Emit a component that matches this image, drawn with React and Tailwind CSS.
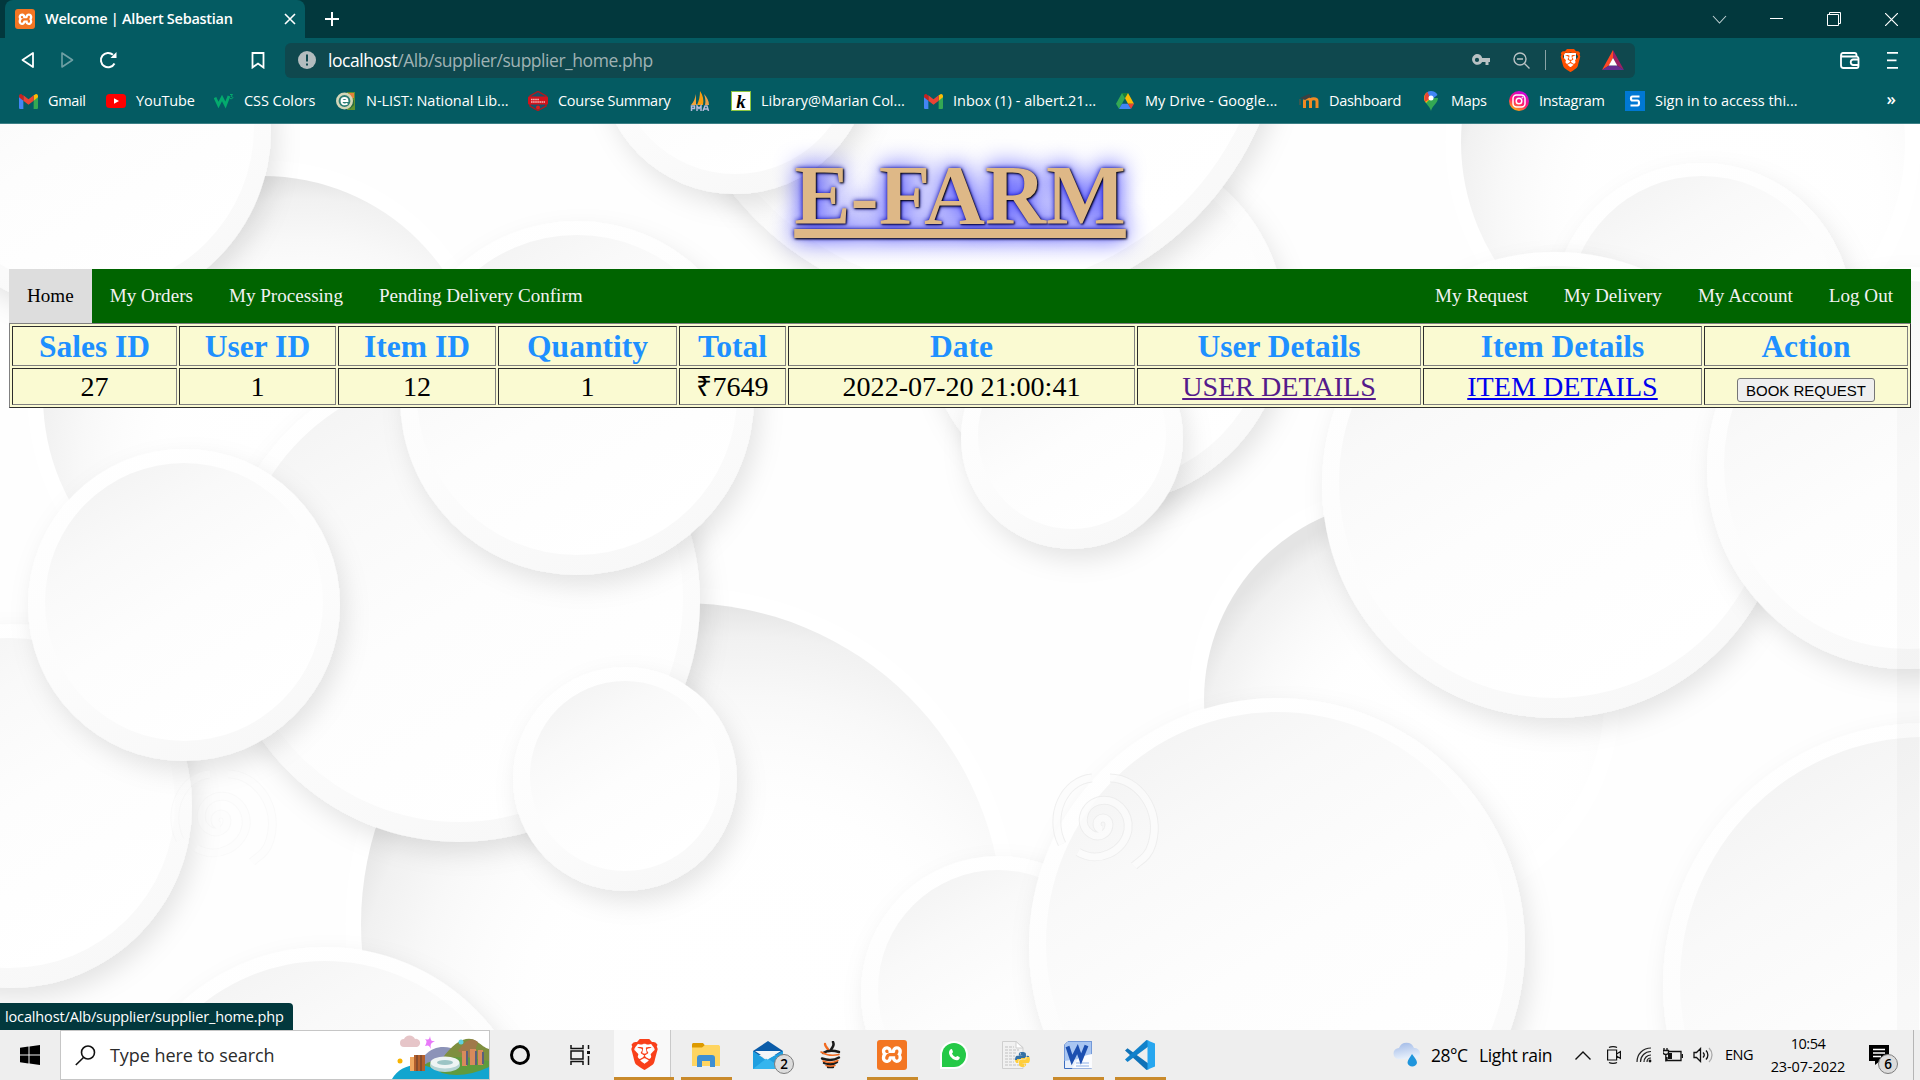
import React from "react";
import { SiBrave, SiXampp } from "react-icons/si";
import { FaPython } from "react-icons/fa";

const UI = "font-['Open_Sans','Noto_Sans',sans-serif]";

/* ---------- page backdrop: overlapping paper discs ---------- */

function Disc({ x, y, r, rim = 17 }) {
  return (
    <g>
      <circle cx={x} cy={y} r={r} fill="url(#rim)" filter="url(#drop)" />
      <circle cx={x} cy={y - 3} r={r - rim} fill="url(#face)" />
    </g>
  );
}

function Hollow({ x, y, r }) {
  return (
    <g>
      <circle cx={x} cy={y} r={r + 16} fill="#ffffff" opacity="0.5" />
      <circle cx={x} cy={y} r={r} fill="url(#hollow)" />
    </g>
  );
}

function Spiral({ x, y, opacity }) {
  return (
    <g transform={`translate(${x} ${y})`} fill="none" opacity={opacity}>
      <path
        d="M0 6a6 6 0 1 1 7-6c0 10-10 15-18 10C-24 2-20-18-4-23 14-27 28-12 26 6 22 28-4 40-24 28M8-46C36-46 60-14 50 20 46 34 38 36 32 42M-40 20C-54-8-38-44-10-46"
        stroke="#ececec"
        strokeWidth="9"
      />
      <path
        d="M0 6a6 6 0 1 1 7-6c0 10-10 15-18 10C-24 2-20-18-4-23 14-27 28-12 26 6 22 28-4 40-24 28M8-46C36-46 60-14 50 20 46 34 38 36 32 42M-40 20C-54-8-38-44-10-46"
        stroke="#fcfcfc"
        strokeWidth="7"
      />
    </g>
  );
}

function Backdrop() {
  return (
    <svg className="absolute inset-0 h-full w-full" viewBox="0 124 1920 906" preserveAspectRatio="none">
      <defs>
        <linearGradient id="rim" x1="0.25" y1="0" x2="0.6" y2="1">
          <stop offset="0" stopColor="#ffffff" />
          <stop offset="0.6" stopColor="#fcfcfc" />
          <stop offset="1" stopColor="#f8f8f8" />
        </linearGradient>
        <linearGradient id="face" x1="0.15" y1="0.05" x2="0.7" y2="0.95">
          <stop offset="0" stopColor="#f3f3f3" />
          <stop offset="0.25" stopColor="#f9f9f9" />
          <stop offset="0.55" stopColor="#fdfdfd" />
          <stop offset="1" stopColor="#ffffff" />
        </linearGradient>
        <radialGradient id="hollow" cx="0.6" cy="0.66" r="0.66">
          <stop offset="0" stopColor="#fefefe" stopOpacity="0" />
          <stop offset="0.5" stopColor="#fdfdfd" stopOpacity="0.3" />
          <stop offset="0.78" stopColor="#f8f8f8" />
          <stop offset="0.92" stopColor="#f1f1f1" />
          <stop offset="1" stopColor="#e4e4e4" />
        </radialGradient>
        <filter id="drop" x="-20%" y="-20%" width="150%" height="150%">
          <feDropShadow dx="6" dy="11" stdDeviation="12" floodColor="#000" floodOpacity="0.1" />
        </filter>
      </defs>
      <rect y="124" width="1920" height="906" fill="#fefefe" />
      <Disc x={1105} y={324} r={180} />
      <Disc x={975} y={0} r={310} />
      <Disc x={735} y={58} r={136} />
      <Hollow x={682} y={924} r={321} />
      <Hollow x={263} y={396} r={220} />
      <Disc x={90} y={130} r={181} />
      <Hollow x={1404} y={700} r={200} />
      <Hollow x={1683} y={142} r={222} />
      <Disc x={1702} y={313} r={150} rim={16} />
      <Disc x={1560} y={335} r={80} />
      <Disc x={1072} y={438} r={111} />
      <Disc x={1555} y={485} r={233} />
      <Disc x={1908} y={468} r={201} />
      <Disc x={10} y={806} r={182} />
      <Disc x={459} y={601} r={241} />
      <Disc x={577} y={398} r={177} />
      <Disc x={184} y={605} r={156} />
      <Disc x={625} y={779} r={112} />
      <Disc x={325} y={1160} r={213} />
      <Disc x={998} y={993} r={137} />
      <Disc x={1277} y={946} r={248} />
      <Disc x={1925} y={985} r={262} />
      <Spiral x={1102} y={824} opacity="0.8" />
      <Spiral x={220} y={820} opacity="0.25" />
      <rect x="1897" y="400" width="22" height="630" fill="#000" opacity="0.018" />
    </svg>
  );
}

/* ---------- small icons ---------- */

function Xampp({ className, glyph }) {
  return (
    <span className={`flex items-center justify-center overflow-hidden rounded-[3px] bg-[#f37623] ${className}`}>
      <span className={`flex items-center justify-center bg-white ${glyph}`}>
        <SiXampp className="h-[125%] w-[125%] shrink-0 text-[#f37623]" />
      </span>
    </span>
  );
}

const Gmail = () => (
  <svg viewBox="0 0 24 18" className="h-[15px] w-[19px]" preserveAspectRatio="none">
    <path d="M0 3v13.500C0 17.400.7 18 1.600 18H5.500V7.500z" fill="#4285f4" />
    <path d="M24 3v13.500c0 .9-.7 1.500-1.600 1.500H18.500V7.500z" fill="#34a853" />
    <path d="M18.500 1.500 20.500.5C22-.5 24 .6 24 2.500V4l-5.500 4z" fill="#fbbc04" />
    <path d="M5.500 8V1.600L12 6.400l6.500-4.800V8L12 13z" fill="#ea4335" />
    <path d="M0 2.500C0 .6 2-.5 3.500.5l2 1.500v6L0 4z" fill="#c5221f" />
  </svg>
);
const YouTube = () => (
  <svg viewBox="0 0 20 14" className="h-[14px] w-5">
    <rect width="20" height="14" rx="3.500" fill="#f00" />
    <path d="M8 4.200v5.600L13 7z" fill="#fff" />
  </svg>
);
const W3 = () => (
  <svg viewBox="0 0 20 16" className="h-4 w-5" fill="none" stroke="#04aa6d">
    <path d="M1 4.500 4.500 12 8 5l3.500 7L15 3" strokeWidth="2.800" />
    <path d="M16 1.500h2.500L17 3.500c3 0 2 3-1 2" strokeWidth="1" />
  </svg>
);
const NList = () => (
  <svg viewBox="0 0 20 20" className="h-5 w-5">
    <path d="M11 1h8v18h-8z" fill="#5e8f2e" />
    <path d="M13 2h5v5h-5z" fill="#e5813a" />
    <path d="M13 12l5-3v5l-4 4z" fill="#2c6b3a" />
    <circle cx="8.500" cy="10" r="7.200" fill="#2c7d74" stroke="#d3d6b8" strokeWidth="2.600" />
    <path d="M5.500 10h6c0-4-6-4-6 0 0 4 4 4 6 2.500" fill="none" stroke="#fff" strokeWidth="1.800" />
  </svg>
);
const Academy = () => (
  <svg viewBox="0 0 20 20" className="h-5 w-5">
    <path d="M10 .5 18 5v10l-8 4.500L2 15V5z" fill="#16536b" stroke="#b3171c" strokeWidth="1.400" />
    <rect x="0" y="5.500" width="20" height="8" rx="1" fill="#d3121b" />
    <path d="M3 8.500h8M3 11h14" stroke="#f4b7b7" strokeWidth="1.300" strokeDasharray="1.600 .5" />
    <circle cx="10" cy="16.500" r="2" fill="#e21b1b" />
  </svg>
);
const Pma = () => (
  <svg viewBox="0 0 20 20" className="h-5 w-5">
    <path d="M6 3v11H1C4 11 5 7 6 3z" fill="#f2a33a" />
    <path d="M10 0c3 4 4 9 3 14H7c2-4 3-9 3-14z" fill="#f89c0e" />
    <path d="M14 3c3 3 5 7 5 11h-4c1-4 0-8-1-11z" fill="#e8a04e" />
    <path d="M1.500 20v-5h3v2.500h-3M7 20v-5l2 2.500 2-2.500v5M13 20l2-5h2l1.500 5M14 18h4" fill="none" stroke="#b4b9dc" strokeWidth="1.500" />
  </svg>
);
const Koha = () => (
  <span className="flex h-5 w-5 items-center justify-center border border-[#8dc63f] bg-white font-['Liberation_Serif',serif] text-[19px] leading-none font-bold text-black italic">k</span>
);
const Drive = () => (
  <svg viewBox="0 0 24 21" className="h-4 w-[18px]" preserveAspectRatio="none">
    <path d="M8 0h8l-4 7z" fill="#188038" />
    <path d="M8 0 0 14l4 7 8-14z" fill="#34a853" />
    <path d="M16 0l8 14h-8L12 7z" fill="#fbbc04" />
    <path d="M4 21l4-7h8l4 7z" fill="#4285f4" />
    <path d="M16 14h8l-4 7z" fill="#ea4335" />
  </svg>
);
const Moodle = () => (
  <svg viewBox="0 0 20 20" className="h-5 w-5" fill="none">
    <path d="M5.500 17V10c0-3 6-3 6 0v7M11.500 10c0-3 6.500-3 6.500 0v7" stroke="#f08a24" strokeWidth="3" />
    <path d="M1 7 10 3l3 2-7 4z" fill="#3c4142" />
    <path d="M1 8v6" stroke="#77553a" />
  </svg>
);
const MapsPin = () => (
  <svg viewBox="0 0 14 20" className="h-5 w-[14px]">
    <path d="M7 20C6 15 0 12 0 7h14c0 5-6 8-7 13z" fill="#34a853" />
    <path d="M0 7a7 7 0 0 1 3-5.700L7 7l-5 5C1 10.500 0 9 0 7z" fill="#fbbc04" />
    <path d="M2 2.200A7 7 0 0 1 4.500.5L7 7 1 11C0 8 0 4.500 2 2.200z" fill="#ea4335" />
    <path d="M3.500 1C7-1 12 .5 13.500 4L7 9z" fill="#4285f4" />
    <circle cx="7" cy="7" r="2.500" fill="#fff" />
  </svg>
);
const Insta = () => (
  <svg viewBox="0 0 20 20" className="h-5 w-5" fill="none" stroke="#fff">
    <defs>
      <linearGradient id="ig" x1="0.2" y1="1" x2="0.7" y2="0">
        <stop offset="0" stopColor="#ffc400" />
        <stop offset="0.45" stopColor="#ff1d6c" />
        <stop offset="1" stopColor="#c800e8" />
      </linearGradient>
    </defs>
    <circle cx="10" cy="10" r="10" fill="url(#ig)" stroke="none" />
    <rect x="4" y="4" width="12" height="12" rx="3.500" strokeWidth="1.500" />
    <circle cx="10" cy="10" r="2.800" strokeWidth="1.500" />
    <circle cx="13.500" cy="6.500" r=".5" />
  </svg>
);
const SignS = () => (
  <svg viewBox="0 0 20 20" className="h-5 w-5">
    <rect width="20" height="20" fill="#0078d4" />
    <path d="M14.500 5.500H7.500c-2 0-2 4 0 4h5c2 0 2 5 0 5H5.500" fill="none" stroke="#fff" strokeWidth="2.200" />
  </svg>
);

/* ---------- browser chrome ---------- */

const bookmarks = [
  { icon: Gmail, label: "Gmail", w: "w-[88px]", t: "tracking-[-0.35px]" },
  { icon: YouTube, label: "YouTube", w: "w-[108px]", t: "tracking-[-0.1px]" },
  { icon: W3, label: "CSS Colors", w: "w-[122px]", t: "tracking-[-0.06px]" },
  { icon: NList, label: "N-LIST: National Lib...", w: "w-[192px]", t: "tracking-[-0.03px]" },
  { icon: Academy, label: "Course Summary", w: "w-[162px]", t: "tracking-[-0.28px]" },
  { icon: Pma, label: "", w: "w-[41px]", t: "" },
  { icon: Koha, label: "Library@Marian Col...", w: "w-[192px]", t: "tracking-[-0.04px]" },
  { icon: Gmail, label: "Inbox (1) - albert.21...", w: "w-[192px]", t: "tracking-[0.02px]" },
  { icon: Drive, label: "My Drive - Google...", w: "w-[184px]", t: "tracking-[0.08px]" },
  { icon: Moodle, label: "Dashboard", w: "w-[122px]", t: "tracking-[-0.3px]" },
  { icon: MapsPin, label: "Maps", w: "w-[88px]", t: "tracking-[-0.3px]" },
  { icon: Insta, label: "Instagram", w: "w-[116px]", t: "tracking-[-0.3px]" },
  { icon: SignS, label: "Sign in to access thi...", w: "w-[200px]", t: "tracking-[-0.02px]" },
];

function TabStrip() {
  return (
    <div className="flex h-[38px] shrink-0 bg-[#02383d] pl-[5px] text-white">
      <div className="flex w-[300px] items-center rounded-t-lg bg-[#045b62] pl-[10px]">
        <Xampp className="h-5 w-5" glyph="h-[15px] w-[15px]" />
        <span className="ml-[10px] w-[240px] text-[14.5px] font-semibold tracking-[-0.28px] whitespace-nowrap">Welcome | Albert Sebastian</span>
        <svg viewBox="0 0 10 10" className="h-[10px] w-[10px] overflow-visible" stroke="currentColor" strokeWidth="1.600">
          <path d="M0 0 10 10M10 0 0 10" />
        </svg>
      </div>
      <svg viewBox="0 0 14 14" className="mt-3 ml-[20px] h-[14px] w-[14px]" stroke="currentColor" strokeWidth="2">
        <path d="M7 0v14M0 7h14" />
      </svg>
      <div className="mr-[22px] ml-auto flex items-center gap-[44px]">
        <svg viewBox="0 0 13 7" className="h-[7px] w-[13px] overflow-visible" fill="none" stroke="#bfd0d2" strokeWidth="1.100">
          <path d="M0 0 6.500 7 13 0" />
        </svg>
        <svg viewBox="0 0 13 2" className="h-[2px] w-[13px]" fill="currentColor">
          <path d="M0 0h13v1H0z" />
        </svg>
        <svg viewBox="0 0 14 14" className="h-[14px] w-[14px]" fill="none" stroke="currentColor">
          <path d="M.5 2.500h11v11H.5zM2.500 2V.5h11v11H12" />
        </svg>
        <svg viewBox="0 0 13 13" className="h-[13px] w-[13px]" stroke="currentColor" strokeWidth="1.200">
          <path d="M0 0 13 13M13 0 0 13" />
        </svg>
      </div>
    </div>
  );
}

function Toolbar() {
  return (
    <div className="flex h-[44px] shrink-0 items-center text-white">
      <svg viewBox="0 0 13 16" className="ml-[21px] h-4 w-[13px]" fill="none" stroke="currentColor" strokeWidth="1.800" strokeLinejoin="round">
        <path d="M12 1v14L1.500 8z" />
      </svg>
      <svg viewBox="0 0 13 16" className="ml-[27px] h-4 w-[13px]" fill="none" stroke="#6fa0a4" strokeWidth="1.600" strokeLinejoin="round">
        <path d="M1 1v14L11.500 8z" />
      </svg>
      <svg viewBox="0 0 18 18" className="ml-[25px] h-[18px] w-[18px]" fill="none" stroke="currentColor" strokeWidth="2">
        <path d="M15.500 12.500A7.200 7.200 0 1 1 14 3.800" />
        <path d="M17.500 1v6h-6z" fill="currentColor" stroke="none" />
      </svg>
      <svg viewBox="0 0 14 17" className="ml-[134px] h-[17px] w-[14px]" fill="none" stroke="currentColor" strokeWidth="1.800">
        <path d="M1.500 1h11v14.500L7 11.500l-5.500 4z" />
      </svg>
      <div className="ml-[20px] flex h-[35px] w-[1350px] items-center rounded-md bg-[#0f484e] pl-[13px]">
        <svg viewBox="0 0 18 18" className="h-[18px] w-[18px]">
          <circle cx="9" cy="9" r="9" fill="#b3bcbe" />
          <path d="M8 3.500h2v7H8zM8 12.500h2v2H8z" fill="#0f484e" />
        </svg>
        <span className="ml-[12px] text-[17.500px] tracking-[-0.46px] whitespace-nowrap text-[#9fb2b4]">
          <span className="text-white">localhost</span>/Alb/supplier/supplier_home.php
        </span>
        <svg viewBox="0 0 18 12" className="ml-auto h-3 w-[18px]" fill="#b9c2c4">
          <path fillRule="evenodd" d="M5 0a5.500 5.500 0 0 1 5.200 4H18v4h-1.500v3h-3V8h-3.300A5.400 5.400 0 1 1 5 0zm0 3.800a2.100 2.100 0 1 0 0 4.200 2.100 2.100 0 0 0 0-4.200z" />
        </svg>
        <svg viewBox="0 0 17 17" className="ml-[23px] h-[17px] w-[17px]" fill="none" stroke="#b9c2c4" strokeWidth="1.400">
          <circle cx="7" cy="7" r="6" />
          <path d="M11.500 11.500 16.500 16.500M4 7h6" />
        </svg>
        <span className="ml-[15px] h-5 w-px bg-[#8aa3a6]" />
        <span className="relative ml-[14px] flex h-[22px] w-5 items-center justify-center text-[#ff5000]">
          <span className="absolute h-[14px] w-[12px] bg-white" />
          <SiBrave className="relative h-[23px] w-[23px] shrink-0" />
        </span>
        <svg viewBox="0 0 22 20" className="mr-[11px] ml-[22px] h-5 w-[22px]">
          <path d="M11 0 0 20 7 15.500 11 8z" fill="#ff4724" />
          <path d="M11 0 22 20 15 15.500 11 8z" fill="#9e1f63" />
          <path d="M0 20h22l-7-4.500H7z" fill="#662d91" />
          <path d="M11 8 15.200 15.500H6.800z" fill="#fff" />
        </svg>
      </div>
      <svg viewBox="0 0 20 17" className="ml-[205px] h-[17px] w-5" fill="none" stroke="currentColor" strokeWidth="1.800">
        <path d="M1 3v10.500c0 1.500 1 2.500 2.500 2.500h13c1 0 2-1 2-2V6.500c0-1-1-2-2-2H3C.5 4.500.5 1 3 1h11.500c1 0 2 1 2 2v1.500" />
        <path d="M19 7.500h-6a2.800 2.800 0 0 0 0 5.500h6" />
      </svg>
      <svg viewBox="0 0 11 17" className="ml-[27px] h-[17px] w-[11px]" fill="currentColor">
        <path d="M0 0h11v1.800H0zM0 7.500h9.500v1.800H0zM0 15h11v1.800H0z" />
      </svg>
    </div>
  );
}

function BookmarksBar() {
  return (
    <div className="flex h-[42px] shrink-0 items-center border-b border-[#3c8086] pb-[3px] pl-[18px] text-[14.500px] text-white">
      {bookmarks.map((b, i) => (
        <div key={i} className={`flex shrink-0 items-center whitespace-nowrap ${b.w}`}>
          <span className="mr-[10px] flex w-5 shrink-0 items-center justify-center">
            <b.icon />
          </span>
          <span className={b.t}>{b.label}</span>
        </div>
      ))}
      <span className="ml-auto pr-[24px] pb-1 text-[17px] font-semibold">»</span>
    </div>
  );
}

/* ---------- page ---------- */

function Nav() {
  const right = ["My Request", "My Delivery", "My Account", "Log Out"];
  const left = ["My Orders", "My Processing", "Pending Delivery Confirm"];
  return (
    <nav className="flex h-[54px] items-stretch bg-[#006400] text-[19.100px] text-[#f2f2f2]">
      <a className="flex items-center bg-[#dddddd] px-[18px] text-black">Home</a>
      {left.map((t) => (
        <a key={t} className="flex items-center px-[18px]">{t}</a>
      ))}
      <span className="flex-1" />
      {right.map((t) => (
        <a key={t} className="flex items-center px-[18px]">{t}</a>
      ))}
    </nav>
  );
}

const cell = "border border-t-[#2c2c2c] border-l-[#2c2c2c] border-r-[#808080] border-b-[#808080] p-0 text-center whitespace-nowrap";

function SalesTable() {
  const heads = ["Sales ID", "User ID", "Item ID", "Quantity", "Total", "Date", "User Details", "Item Details", "Action"];
  return (
    <table className="w-[1902px] table-fixed border-separate border-spacing-[2px] border border-t-[#808080] border-r-[#2c2c2c] border-b-[#2c2c2c] border-l-[#808080] bg-[#fafad2]">
      <colgroup>
        <col className="w-[165px]" />
        <col className="w-[157px]" />
        <col className="w-[158px]" />
        <col className="w-[179px]" />
        <col className="w-[107px]" />
        <col className="w-[347px]" />
        <col className="w-[284px]" />
        <col className="w-[279px]" />
        <col className="w-[204px]" />
      </colgroup>
      <thead>
        <tr className="h-10 text-[31.500px] leading-[37px] text-[#1e90ff]">
          {heads.map((h) => (
            <th key={h} className={`align-middle ${cell}`}>{h}</th>
          ))}
        </tr>
      </thead>
      <tbody>
        <tr className="h-[37px] text-[28.100px] leading-[33px] text-black">
          <td className={`align-middle ${cell}`}>27</td>
          <td className={`align-middle ${cell}`}>1</td>
          <td className={`align-middle ${cell}`}>12</td>
          <td className={`align-middle ${cell}`}>1</td>
          <td className={`align-middle ${cell}`}>₹7649</td>
          <td className={`align-middle ${cell}`}>2022-07-20 21:00:41</td>
          <td className={`align-middle ${cell}`}><a className="text-[#551a8b] underline">USER DETAILS</a></td>
          <td className={`align-middle ${cell}`}><a className="text-[#0000ee] underline">ITEM DETAILS</a></td>
          <td className={`align-top ${cell}`}>
            <button className="mx-auto mt-[9px] block h-6 w-[138px] rounded-[3px] border border-[#767676] bg-[#efefef] font-['Liberation_Sans',Arial,sans-serif] text-[15px] leading-[23px]">
              BOOK REQUEST
            </button>
          </td>
        </tr>
      </tbody>
    </table>
  );
}

/* ---------- taskbar ---------- */

const Skyline = () => (
  <svg viewBox="0 0 97 48" className="h-12 w-[97px]">
    <path d="M33 24C42 14 56 14 66 20V48H33z" fill="#8c93b8" />
    <path d="M50 28C62 10 76 4 84 10c6 4 9 7 13 8V48H50z" fill="#7f8f3f" />
    <path d="M66 20C74 8 80 6 86 11L80 28z" fill="#a0794a" />
    <path d="M28 36C50 22 78 26 97 30V48H28z" fill="#5f9b3c" />
    <path d="M0 48C8 34 28 28 50 42 64 46 80 44 97 36V48z" fill="#12a5cf" />
    <path d="M18 26h5v14h-5z" fill="#f0a860" />
    <path d="M22 24h11v16H22z" fill="#b4602c" />
    <path d="M25 24v16M29 24v16" stroke="#5a3a30" />
    <path d="M70 20h5v15h-5zM78 18h6v16h-6zM86 19h5v15h-5z" fill="#d98a5c" />
    <path d="M75 20v14M84 20v14M91 21v12" stroke="#5b5f7d" strokeWidth="2" />
    <ellipse cx="53" cy="34" rx="15" ry="7" fill="#b5d3d4" />
    <ellipse cx="53" cy="31.500" rx="14.500" ry="6" fill="#eff4f4" />
    <ellipse cx="53" cy="31.500" rx="8" ry="2.500" fill="#9cc4c5" />
    <path d="M12 16a4 4 0 0 1 0-8 6 6 0 0 1 11 0 4 4 0 0 1 2 8z" fill="#e6c5c8" />
    <path d="M38 5c1 5 1 5 5 5-4 2-5 3-4 8-2-4-3-4-6-3 2-4 2-5 0-7 4 1 4 1 5-3z" fill="#e879f9" />
    <circle cx="8" cy="30" r="2.500" fill="#f8b400" />
    <circle cx="69" cy="11" r="2.500" fill="#5fd0e0" />
  </svg>
);

const Folder = () => (
  <svg viewBox="0 0 28 24" className="h-6 w-7">
    <path d="M0 1.500C0 .7.700 0 1.500 0H11l2 2.500V6H0z" fill="#dd9a00" />
    <path d="M0 4.500h10L13 2h13c1 0 2 .7 2 1.500V23H0z" fill="#ffd561" />
    <path d="M5 24V15c0-2 1-3 3-3h12c2 0 3 1 3 3v9h-5v-6h-8v6z" fill="#3e8fd3" />
  </svg>
);
const Mail = () => (
  <svg viewBox="0 0 30 28" className="h-7 w-[30px]">
    <path d="M0 10 15 0l15 10v4H0z" fill="#0a5ba8" />
    <path d="M0 10 13 19 30 10v18H0z" fill="#1f9fe0" />
    <path d="M0 28 14 17 30 28z" fill="#35b5ee" />
    <path d="M2 10h26L14.500 18.500z" fill="#f3f6f8" />
  </svg>
);
const Bee = () => (
  <svg viewBox="0 0 22 28" className="h-7 w-[22px]" fill="none" strokeLinecap="round">
    <path d="M6 3c0 3 3 4 4 7" stroke="#f26b21" strokeWidth="2.400" />
    <path d="M14 1c2 4-1 5-2 8" stroke="#1b1b1b" strokeWidth="2.600" />
    <path d="M4 12c5-3 10-3 16-1M3 17.500c6 2 12 2 17-1M5 22c5 2 9 2 13-1M9 26h5" stroke="#1b1b1b" strokeWidth="2.400" />
    <path d="M2 11c5 3 12 4 18 2.500M4 20c5 2 10 2 15-.500M7 24.500c3 1 6 1 9 0" stroke="#f26b21" strokeWidth="1.500" />
  </svg>
);
const PyFile = () => (
  <span className="relative block h-7 w-7">
    <svg viewBox="0 0 22 28" className="h-7 w-[22px]">
      <path d="M.5.500H14l7 6V27.500H.5z" fill="#f1f1f1" stroke="#cfcfcf" />
      <path d="M3 6h9M3 9h14M3 12h12M3 15h10M3 18h12M3 21h9M3 24h14" stroke="#c2c2c2" strokeWidth="1.200" strokeDasharray="3 1" />
      <path d="M14 .5V7h7z" fill="#fff" stroke="#cfcfcf" />
    </svg>
    <svg className="absolute h-0 w-0">
      <defs>
        <linearGradient id="py" x1="0" y1="0" x2="0.25" y2="1">
          <stop offset="0.500" stopColor="#3571a5" />
          <stop offset="0.500" stopColor="#ffce3c" />
        </linearGradient>
      </defs>
    </svg>
    <FaPython className="absolute -right-px bottom-px h-[17px] w-[17px] [&>path]:fill-[url(#py)]" />
  </span>
);
const Word = () => (
  <svg viewBox="0 0 28 28" className="h-7 w-7">
    <path d="M4 .5h23.500V27.500H.5V4z" fill="#e9f0fb" stroke="#3c6dc0" />
    <path d="M4 .5h23.500V16L.5 20V4z" fill="#a9c6f2" />
    <path d="M15 16 28 13v14.500H8z" fill="#fbfcff" />
    <path d="M12 22h13M12 25h13" stroke="#8fb0e6" />
    <path d="M3.500 5.500 8 19l5.500-11L17 18 22.500 4.500" fill="none" stroke="#1c4fb0" strokeWidth="4" />
  </svg>
);
const Code = () => (
  <svg viewBox="0 0 30 30" className="h-[30px] w-[30px]">
    <path d="M0 10.500 2.500 8.200 24 24v5L21.500 30z" fill="#0f72b8" />
    <path d="M0 19.500 2.500 22 24 6V1L21.500 0z" fill="#1181cb" />
    <path d="M21.500 0 30 3.500v23L21.500 30c1-.5 1-1 1-3V3c0-2 0-2.500-1-3z" fill="#27a6ef" />
  </svg>
);
const BraveBig = () => (
  <span className="relative flex h-[31px] w-[26px] items-center justify-center text-[#f9401a]">
    <span className="absolute h-5 w-4 bg-white" />
    <SiBrave className="relative h-[31px] w-[31px] shrink-0" />
  </span>
);
const WhatsApp = () => (
  <span className="flex h-6 w-6 items-center justify-center rounded-full rounded-bl-[5px] bg-[#25c947] text-white ring-2 ring-white">
    <svg viewBox="0 0 20 20" className="h-5 w-5">
      <path d="M6.500 4.500c1-.8 1.500-.5 2 1l.5 1.500c0 .8-1 1-1 1.600.8 1.700 2 2.800 3.700 3.500.6 0 1-1.200 1.700-1.100l2 1c1 .5-.3 3-2 3.200C9.500 15.700 4.700 11 5 7.500c.1-1.500.7-2.400 1.500-3z" fill="currentColor" />
    </svg>
  </span>
);

const apps = [
  { icon: Folder, open: true },
  { icon: Mail, badge: "2" },
  { icon: Bee },
  { icon: () => <Xampp className="h-[30px] w-[30px]" glyph="h-[22px] w-[22px]" />, open: true },
  { icon: WhatsApp },
  { icon: PyFile },
  { icon: Word, open: true },
  { icon: Code, open: true },
];

const badge = "absolute flex h-5 w-5 items-center justify-center rounded-full border border-[#7d7d7d] bg-[#dcdcdc] text-[13.500px] font-semibold text-black";

function Taskbar() {
  return (
    <div className="flex h-[50px] shrink-0 bg-[#eeeeee] text-black">
      <div className="flex w-[60px] items-center justify-center">
        <svg viewBox="0 0 20 20" className="h-5 w-5" fill="#000">
          <path d="M0 2.800 8.500 1.600V9.500H0zM9.500 1.500 20 0v9.500H9.500zM0 10.500h8.500v8L0 17.300zM9.500 10.500H20V20L9.500 18.600z" />
        </svg>
      </div>
      <div className="flex w-[430px] items-center border border-[#c6c6c6] bg-white">
        <svg viewBox="0 0 21 21" className="ml-[14px] h-[21px] w-[21px]" fill="none" stroke="#111" strokeWidth="1.600">
          <circle cx="13" cy="7.500" r="6.500" />
          <path d="M8.500 12.500.8 20" />
        </svg>
        <span className="ml-[14px] text-[18px] tracking-[-0.06px] text-[#2b2b2b]">Type here to search</span>
        <span className="mt-auto ml-auto"><Skyline /></span>
      </div>
      <div className="flex w-[60px] items-center justify-center">
        <span className="h-5 w-5 rounded-full border-[3px] border-black" />
      </div>
      <div className="flex w-[63px] items-center justify-center">
        <svg viewBox="0 0 20 20" className="mr-1 h-5 w-5" fill="none" stroke="#111" strokeWidth="1.500">
          <path d="M1 0v3.500h12V0M1 20v-3.500h12V20M1 6h12v8H1zM18.500 0v4M18.500 11v9" />
          <path d="M17 6h3v3h-3z" fill="#111" stroke="none" />
        </svg>
      </div>
      <div className="mr-[4px] ml-px flex w-[57px] flex-col border-r border-[#c9c9c9] bg-[#f9f9f9]">
        <div className="flex flex-1 items-center justify-center pt-[2px] pl-1"><BraveBig /></div>
        <div className="-mr-[4px] h-[3px] bg-[#c98a2b]" />
      </div>
      {apps.map((a, i) => (
        <div key={i} className="relative flex w-[62px] flex-col items-center">
          <div className="flex h-[47px] items-center pt-[3px]"><a.icon /></div>
          {a.open && <div className="h-[3px] w-[51px] bg-[#c98a2b]" />}
          {a.badge && <span className={`top-[24px] right-[5px] ${badge}`}>{a.badge}</span>}
        </div>
      ))}
      <div className="ml-auto flex items-center">
        <svg viewBox="0 0 28 26" className="h-[26px] w-7">
          <defs>
            <linearGradient id="cloud" x1="0" y1="0" x2="0.300" y2="1">
              <stop offset="0" stopColor="#9fb8e6" />
              <stop offset="1" stopColor="#e6effb" />
            </linearGradient>
          </defs>
          <path d="M6 17a5.500 5.500 0 0 1 0-11 8 8 0 0 1 15 0 5.500 5.500 0 0 1 1 11z" fill="url(#cloud)" />
          <path d="M19 12c3 4 5 6 5 9a5 5 0 0 1-9.500 0c0-3 2-5 4.500-9z" fill="#1f95dc" />
        </svg>
        <span className="ml-[10px] w-[48px] text-[17.500px] tracking-[-0.5px]">28°C</span>
        <span className="w-[96px] text-[17.500px] tracking-[-0.35px] whitespace-nowrap">Light rain</span>
        <svg viewBox="0 0 16 9" className="h-[9px] w-4" fill="none" stroke="#111" strokeWidth="1.400">
          <path d="M.5 8.500 8 1l7.500 7.500" />
        </svg>
        <svg viewBox="0 0 14 18" className="ml-4 h-[18px] w-[14px]" fill="none" stroke="#111" strokeWidth="1.200">
          <path d="M.6 4h9v10h-9zM9.600 8l3.800-2.500v7L9.600 10M2 1.500C4 .3 8 .3 10 1.500M2 16.500c2 1.200 6 1.200 8 0" />
        </svg>
        <svg viewBox="0 0 16 16" className="ml-[15px] h-4 w-4" fill="none" stroke="#222" strokeWidth="1.200">
          <path d="M1 15C1 7 7 1 15 1M4.500 15C4.500 9 9 4.500 15 4.500M8 15c0-4 3-7 7-7M11 15c0-2.500 1.500-4 4-4" />
          <circle cx="14" cy="14" r="1.400" fill="#111" stroke="none" />
        </svg>
        <svg viewBox="0 0 20 14" className="ml-[11px] h-[14px] w-5" fill="none" stroke="#111" strokeWidth="1.300">
          <path d="M6 3.500h12v9H4V9M19.500 6v4M1 0v2M4 0v2M0 2.500h5.500v2C5.500 7 0 7 0 4.500zM2.800 6.500v7" />
          <path d="M5 5h4v6H5z" fill="#111" stroke="none" />
        </svg>
        <svg viewBox="0 0 20 16" className="ml-[10px] h-4 w-5" fill="none" stroke="#111" strokeWidth="1.300">
          <path d="M1 5.500h2.500L7.500 1.500v13L3.500 10.500H1zM10 5.500c1.500 1.500 1.500 3.500 0 5M13 3.500c2.500 2.500 2.500 6.500 0 9" />
          <path d="M16 1c4 4 4 10 0 14" stroke="#aaa" />
        </svg>
        <span className="ml-[12px] w-[43px] text-[14.500px] tracking-[-0.5px]">ENG</span>
        <div className="flex w-[80px] flex-col items-center text-[14.500px] leading-[23px] tracking-[-0.45px] whitespace-nowrap">
          <span>10:54</span>
          <span className="tracking-[-0.100px]">23-07-2022</span>
        </div>
        <div className="relative mr-[6px] ml-[21px] h-[50px] w-[45px] border-r border-[#b5b5b5]">
          <svg viewBox="0 0 20 20" className="mt-[15px] h-5 w-5">
            <path d="M0 0h20v16h-9l-5 4v-4H0z" fill="#000" />
            <path d="M4 4.500h12M4 8h12M4 11.500h8" stroke="#fff" strokeWidth="1.300" />
          </svg>
          <span className={`top-[24px] left-[9px] ${badge}`}>6</span>
        </div>
      </div>
    </div>
  );
}

export default function App() {
  return (
    <div className={`flex h-[1080px] w-[1920px] flex-col overflow-hidden bg-white ${UI}`}>
      <header className="flex shrink-0 flex-col bg-[#045b62]">
        <TabStrip />
        <Toolbar />
        <BookmarksBar />
      </header>
      <main className="relative flex-1 overflow-hidden bg-white font-['Liberation_Serif','Times_New_Roman',serif]">
        <Backdrop />
        <div className="relative px-[9px]">
          <div className="flex h-[145px] justify-center pt-[25px]">
            <h1 className="text-[84.500px] leading-[94px] font-bold text-[#deb887] underline decoration-[9px] underline-offset-[5px] [text-decoration-skip-ink:none] [text-shadow:1px_1px_2px_black,0_0_25px_blue,0_0_5px_darkblue]">
              E-FARM
            </h1>
          </div>
          <Nav />
          <SalesTable />
        </div>
        <div className={`absolute bottom-0 left-0 flex h-[27px] w-[293px] items-center rounded-tr bg-[#02383d] pl-[5px] text-[14.500px] tracking-[-0.14px] whitespace-nowrap text-white ${UI}`}>
          localhost/Alb/supplier/supplier_home.php
        </div>
      </main>
      <Taskbar />
    </div>
  );
}
